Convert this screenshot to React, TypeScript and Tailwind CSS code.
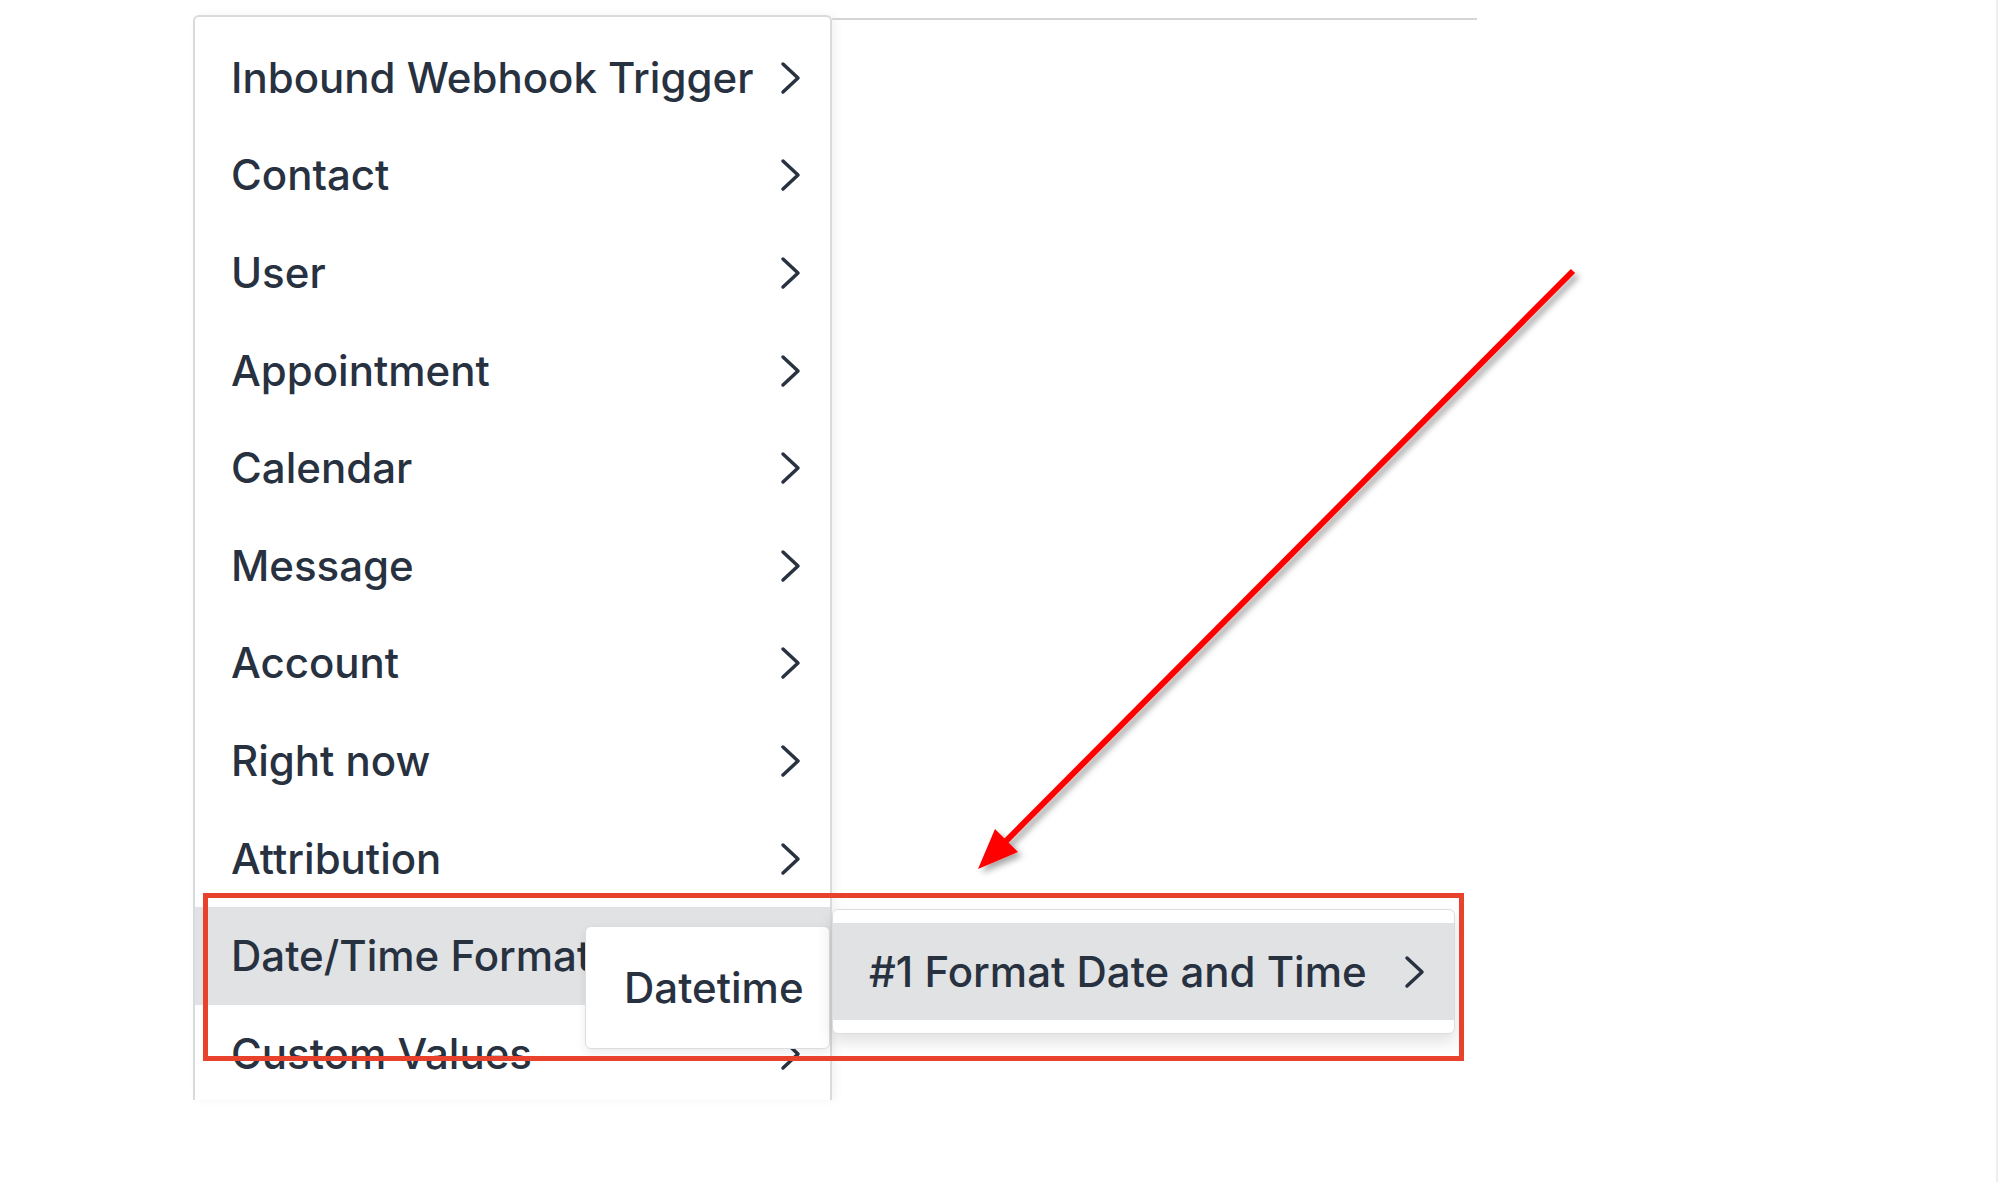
const items = [
  "Inbound Webhook Trigger",
  "Contact",
  "User",
  "Appointment",
  "Calendar",
  "Message",
  "Account",
  "Right now",
  "Attribution",
  "Date/Time Format",
  "Custom Values",
];

function Chevron() {
  return (
    <svg width="22" height="34" viewBox="0 0 22 34" fill="none" className="shrink-0">
      <polyline
        points="3,3 18,17 3,31"
        stroke="#283241"
        strokeWidth="3.5"
        strokeLinecap="round"
        strokeLinejoin="round"
      />
    </svg>
  );
}

function Arrow() {
  return (
    <svg className="pointer-events-none absolute left-0 top-0" width="2000" height="1182">
      <defs>
        <filter id="drop" x="-10%" y="-10%" width="120%" height="120%">
          <feDropShadow dx="4" dy="4" stdDeviation="3" floodColor="#000" floodOpacity="0.35" />
        </filter>
      </defs>
      <g filter="url(#drop)">
        <line x1="1573" y1="271" x2="1002" y2="845" stroke="#ff0000" strokeWidth="6" />
        <polygon points="978,869 995,829 1018,852" fill="#ff0000" />
      </g>
    </svg>
  );
}

export default function App() {
  return (
    <div className="relative h-[1182px] w-[2000px] overflow-hidden bg-white font-['Inter',sans-serif] text-[42px] font-medium text-[#273140]">
      <div className="flex h-full w-[1998px] border-r-2 border-[#eceef1] pl-[193px] pt-[15px]">
        <div className="h-[1085px] w-[639px] shrink-0 overflow-hidden rounded-t-md border-2 border-b-0 border-[#d9dadc] bg-white pt-[12px] shadow-[4px_0_10px_rgba(0,0,0,0.05)]">
          {items.map((label, i) => (
            <div
              key={label}
              className={
                i === 9
                  ? "flex h-[97.6px] items-center justify-between bg-[#e1e2e4] pl-[36px] pr-[28px]"
                  : "flex h-[97.6px] items-center justify-between pl-[36px] pr-[28px]"
              }
            >
              <span className="whitespace-nowrap leading-none">{label}</span>
              <Chevron />
            </div>
          ))}
        </div>
        <div className="mt-[3px] h-0 w-[645px] border-t-2 border-[#d4d5d7]" />
      </div>

      {/* second level popup */}
      <div className="absolute left-[585px] top-[926px] flex h-[123px] w-[245px] items-center rounded-md border border-[#dcdde0] bg-white pl-[38px] shadow-[0_4px_10px_rgba(0,0,0,0.08)]">
        <span className="leading-none">Datetime</span>
      </div>

      {/* third level panel */}
      <div className="absolute left-[832px] top-[909px] w-[623px] rounded-md border border-[#dcdde0] bg-white py-[13px] shadow-[0_8px_16px_rgba(0,0,0,0.12)]">
        <div className="flex h-[97px] items-center justify-between bg-[#e1e2e4] pl-[36px] pr-[28px]">
          <span className="whitespace-nowrap leading-none">#1 Format Date and Time</span>
          <Chevron />
        </div>
      </div>

      {/* highlight box */}
      <div className="pointer-events-none absolute left-[203px] top-[893px] h-[168px] w-[1261px] border-[5px] border-[#e8412c]" />

      <Arrow />
    </div>
  );
}
